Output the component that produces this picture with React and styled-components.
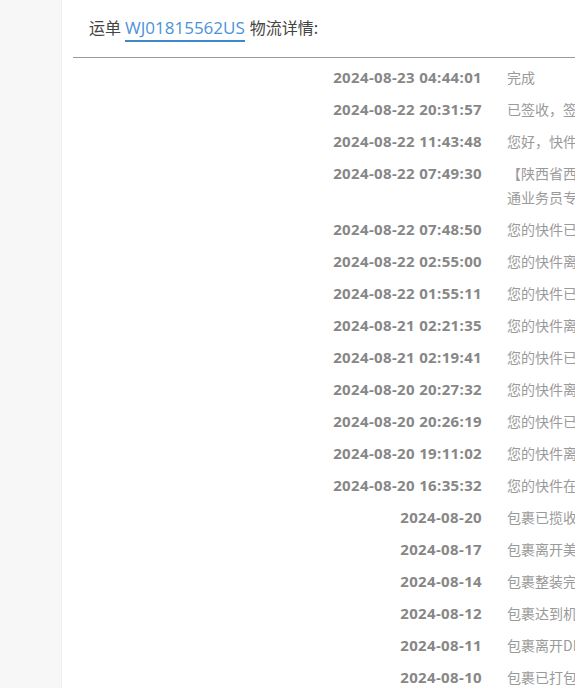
import React from "react"
import styled, { createGlobalStyle } from "styled-components"

const GlobalStyle = createGlobalStyle`
  html, body {
    margin: 0;
    padding: 0;
    background: #fff;
  }
  body {
    font-family: "Open Sans", "Noto Sans CJK SC", sans-serif;
  }
`

const Page = styled.div`
  display: flex;
  width: 575px;
  height: 688px;
  overflow: hidden;
`

const Sidebar = styled.aside`
  width: 61px;
  flex: none;
  background: #f7f7f7;
  border-right: 1px solid #f0f0f0;
`

const Main = styled.main`
  flex: 1;
  min-width: 0;
  padding-left: 11px;
  overflow: hidden;
`

const Header = styled.h3`
  margin: 0;
  padding: 15px 0 0 16px;
  height: 57px;
  box-sizing: border-box;
  font-size: 16px;
  font-weight: 400;
  line-height: 24px;
  color: #444;
  font-family: "Noto Sans CJK SC", sans-serif;
  white-space: nowrap;
`

const Waybill = styled.a`
  color: #4a93d8;
  text-decoration: none;
  border-bottom: 2px solid #3d88c9;
  padding-bottom: 1px;
  margin: 0 5px 0 4px;
  font-size: 17px;
  font-family: "Open Sans", sans-serif;
`

const Divider = styled.hr`
  margin: 0;
  border: none;
  border-top: 1px solid #9a9a9a;
  width: 600px;
`

const List = styled.ul`
  list-style: none;
  margin: 0;
  padding: 3px 0 0;
`

const Row = styled.li`
  display: grid;
  grid-template-columns: 409px 600px;
  column-gap: 25px;
  padding: 4px 0;
  line-height: 24px;
`

const Time = styled.span`
  text-align: right;
  font-family: "Open Sans", sans-serif;
  font-weight: 700;
  font-size: 15px;
  letter-spacing: 0.35px;
  color: #878787;
  white-space: nowrap;
`

const Desc = styled.span`
  font-family: "Noto Sans CJK SC", sans-serif;
  font-size: 14px;
  color: #9a9a9a;
  white-space: pre-line;
`

const events = [
  ["2024-08-23 04:44:01", "完成"],
  ["2024-08-22 20:31:57", "已签收，签收人凭取货码签收。"],
  ["2024-08-22 11:43:48", "您好，快件已送达，请及时领取。"],
  ["2024-08-22 07:49:30", "【陕西省西安市】您的快件已到达，联系电话\n通业务员专用，请保持电话畅通。"],
  ["2024-08-22 07:48:50", "您的快件已到达西安转运中心"],
  ["2024-08-22 02:55:00", "您的快件离开西安转运中心"],
  ["2024-08-22 01:55:11", "您的快件已到达转运中心"],
  ["2024-08-21 02:21:35", "您的快件离开郑州转运中心"],
  ["2024-08-21 02:19:41", "您的快件已到达郑州转运中心"],
  ["2024-08-20 20:27:32", "您的快件离开上海转运中心"],
  ["2024-08-20 20:26:19", "您的快件已到达上海转运中心"],
  ["2024-08-20 19:11:02", "您的快件离开海关监管中心"],
  ["2024-08-20 16:35:32", "您的快件在海关清关中"],
  ["2024-08-20", "包裹已揽收"],
  ["2024-08-17", "包裹离开美国仓库"],
  ["2024-08-14", "包裹整装完毕"],
  ["2024-08-12", "包裹达到机场"],
  ["2024-08-11", "包裹离开DE仓库"],
  ["2024-08-10", "包裹已打包"],
]

const App = () => {
  return (
    <>
      <GlobalStyle />
      <Page>
        <Sidebar />
        <Main>
          <Header>
            运单<Waybill href="#">WJ01815562US</Waybill>物流详情:
          </Header>
          <Divider />
          <List>
            {events.map(([time, text]) => (
              <Row key={time}>
                <Time>{time}</Time>
                <Desc>{text}</Desc>
              </Row>
            ))}
          </List>
        </Main>
      </Page>
    </>
  )
}

export default App
